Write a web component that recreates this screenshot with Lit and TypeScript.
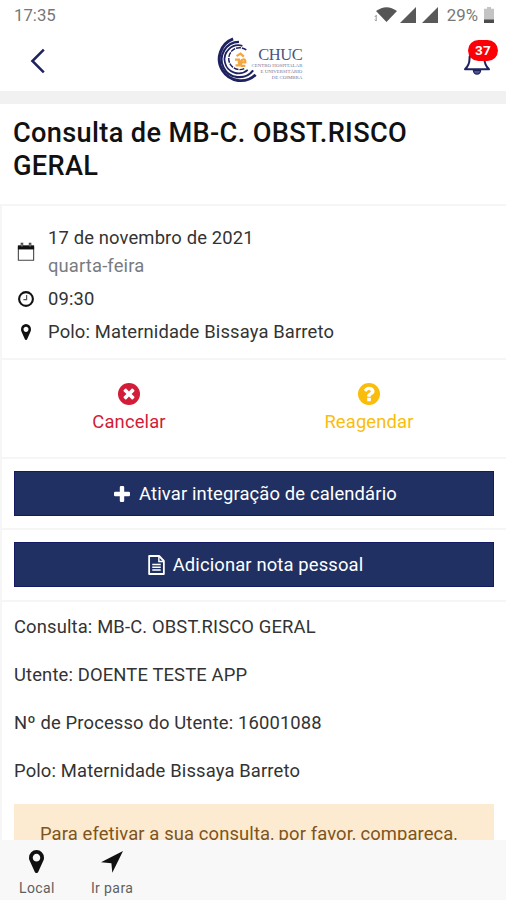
import { LitElement, html, css, svg } from "lit";
import { customElement, property } from "lit/decorators.js";

const icons: Record<string, { box: string; body: unknown }> = {
  back: {
    box: "0 0 16 26",
    body: svg`<path d="M13.800 1.600L2.400 13l11.400 11.400" fill="none" stroke="currentColor" stroke-width="2.500"/>`,
  },
  wifi: {
    box: "0 0 24 18",
    body: svg`<path d="M2 5Q12.500 -2.600 23 5L12.500 16z" fill="#565656"/><path d="M2.200 9v6M.8 11l1.400-1.600M.8 13.500l1.400 1.600" stroke="#999" stroke-width="1" fill="none"/>`,
  },
  signal: { box: "0 0 16 16", body: svg`<path d="M16 0v16H0z" fill="#595959"/>` },
  battery: {
    box: "0 0 10 16",
    body: svg`<path d="M3 0h4v1.800h3V16H0V1.800h3z" fill="#c4c4c4"/><path d="M0 12.500h10V16H0z" fill="#4c4c4c"/>`,
  },
  bell: {
    box: "0 0 28 30",
    body: svg`<path d="M2 23.300Q6.500 19 6.500 13q0-7 7.500-7t7.500 7q0 6 4.500 10.300z" fill="none" stroke="currentColor" stroke-width="2" stroke-linejoin="round"/><path d="M10.400 24.500a3.600 3.600 0 0 0 7.200 0z" fill="#4d5788" stroke="currentColor" stroke-width="1.200"/>`,
  },
  calendar: {
    box: "0 0 20 21",
    body: svg`<path d="M1.500 5h17v14.200h-17z" fill="none" stroke="#444" stroke-width="1.200" stroke-linejoin="round"/><path d="M1 3.500h18v4.300H1z" fill="#111"/><path d="M5.500.8v4M14.500.8v4" stroke="#333" stroke-width="2.800"/><path d="M5.500 1.600v3M14.500 1.600v3" stroke="#bbb" stroke-width=".9"/>`,
  },
  clock: {
    box: "0 0 18 18",
    body: svg`<circle cx="9" cy="9" r="6.900" fill="none" stroke="#111" stroke-width="2.100"/><path d="M9.600 5v4.700H6.400" fill="none" stroke="#555" stroke-width="1.200"/>`,
  },
  marker: {
    box: "0 128 1024 1536",
    body: svg`<path fill="currentColor" d="M768 640q0-106-75-181t-181-75-181 75-75 181 75 181 181 75 181-75 75-181zm256 0q0 109-33 179l-364 774q-16 33-47.500 52t-67.500 19-67.500-19-46.500-52l-365-774q-33-70-33-179 0-212 150-362t362-150 362 150 150 362z"/>`,
  },
  cancel: {
    box: "128 128 1536 1536",
    body: svg`<circle cx="896" cy="896" r="768" fill="currentColor"/><path fill="#fff" d="M1277 1122q0-26-19-45l-181-181 181-181q19-19 19-45 0-27-19-46l-90-90q-19-19-46-19-26 0-45 19l-181 181-181-181q-19-19-45-19-27 0-46 19l-90 90q-19 19-19 46 0 26 19 45l181 181-181 181q-19 19-19 45 0 27 19 46l90 90q19 19 46 19 26 0 45-19l181-181 181 181q19 19 45 19 27 0 46-19l90-90q19-19 19-46z"/>`,
  },
  question: {
    box: "128 128 1536 1536",
    body: svg`<circle cx="896" cy="896" r="768" fill="currentColor"/><path fill="#fff" d="M1024 1376v-192q0-14-9-23t-23-9h-192q-14 0-23 9t-9 23v192q0 14 9 23t23 9h192q14 0 23-9t9-23zm256-672q0-88-55.500-163t-138.500-116-170-41q-243 0-371 213-15 24 8 42l132 100q7 6 19 6 16 0 25-12 53-68 86-92 34-24 86-24 48 0 85.500 26t37.500 59q0 38-20 61t-68 45q-63 28-115.500 86.500t-52.500 125.500v36q0 14 9 23t23 9h192q14 0 23-9t9-23q0-19 21.500-49.500t54.500-49.500q32-18 49-28.500t46-35 44.500-48 28-60.500 12.500-81z"/>`,
  },
  plus: {
    box: "0 0 16 16",
    body: svg`<path fill="currentColor" d="M7 0h2q1.200 0 1.200 1.200v4.600h4.600Q16 5.800 16 7v2q0 1.200-1.200 1.200h-4.600v4.600Q10.200 16 9 16H7q-1.200 0-1.200-1.200v-4.600H1.200Q0 10.200 0 9V7q0-1.200 1.200-1.200h4.600V1.200Q5.800 0 7 0z"/>`,
  },
  note: {
    box: "0 0 18 20",
    body: svg`<g fill="none" stroke="currentColor"><path stroke-width="1.900" stroke-linejoin="round" d="M1.200 1h10.600l5 5v13H1.200z"/><path stroke-width="1.500" d="M11.500 1.500v5h5M4.500 9.500h9M4.500 12.300h9M4.500 15.100h9"/></g>`,
  },
  go: { box: "0 0 22 22", body: svg`<path fill="currentColor" d="M22 0L11.300 21.800l-.9-9.600L0 11.300z"/>` },
  logo: {
    box: "0 0 44 48",
    body: svg`<g fill="none" stroke="#1e2360"><path stroke-width="3" d="M17.500 2A22 22 0 1 0 40.500 38.500"/><path stroke-width="2.200" d="M23.500 5A18 18 0 1 0 38 34"/><path stroke-width="1.800" d="M27 9A14.300 14.300 0 1 0 32.500 33.500"/><path stroke-width="1.500" stroke-dasharray="5 1" d="M31 13.200A11.200 11.200 0 1 0 29.500 32"/></g><g fill="none" stroke="#f3a640" stroke-width="2.300"><path d="M21 19.500l4-2.500 3.500 3M19.500 23h4v6H20M30 29.500h-4q-1.500-6 1.500-6.500t2.500 3h-4"/></g>`,
  },
};

@customElement("ui-icon")
class UiIcon extends LitElement {
  @property() name = "";
  static styles = css`
    :host { display: block; flex: none; }
    .glyph { display: block; width: 100%; height: 100%; overflow: visible; }
  `;
  render() {
    const icon = icons[this.name];
    return html`<svg class="glyph" viewBox=${icon.box} preserveAspectRatio="none">${icon.body}</svg>`;
  }
}

@customElement("app-root")
class AppRoot extends LitElement {
  static styles = css`
    :host {
      display: flex; flex-direction: column; width: 506px; height: 900px; overflow: hidden;
      box-sizing: border-box; background: #fff; color: #333;
      font: 400 18.4px/28px Roboto, "Noto Sans", sans-serif; letter-spacing: .14px;
    }
    * { box-sizing: border-box; }
    .status {
      flex: none; display: flex; align-items: center; height: 30px; padding: 0 12px 0 14px;
      font-size: 16.800px; line-height: 30px; color: #777; letter-spacing: 0;
    }
    .time { flex: 1; }
    .wifi { width: 24px; height: 18px; }
    .signal { width: 16px; height: 16px; margin-left: 2px; }
    .signal + .signal { margin-left: 6px; }
    .charge { margin: 0 6px 0 9px; }
    .battery { width: 10px; height: 16px; }
    .bar {
      flex: none; display: grid; grid-template-columns: 1fr auto 1fr; align-items: center;
      height: 61px; padding: 0 15px 0 30px; color: #1e2360;
    }
    .back { width: 16px; height: 26px; }
    .brand { display: flex; letter-spacing: 0; padding-right: 3px; }
    .logo { width: 43px; height: 47px; }
    .words { display: flex; flex-direction: column; align-items: flex-end; padding-top: 10px; margin-left: -7px; font-family: "Liberation Serif", serif; }
    .name { font-size: 16.500px; line-height: 16px; color: #4d5380; letter-spacing: -.4px; }
    .sub { display: block; font-size: 4.900px; line-height: 6px; color: #71769a; text-align: right; white-space: nowrap; }
    .alerts { position: relative; justify-self: end; width: 28px; height: 30px; }
    .bell { width: 28px; height: 30px; }
    .count {
      position: absolute; left: 5px; top: -6px; width: 30px; height: 21px; border-radius: 11px;
      background: #fb0007; color: #fff; font-size: 13.500px; line-height: 21px; font-weight: 700; text-align: center;
    }
    .band { flex: none; height: 13px; background: #f1f1f1; }
    .title {
      flex: none; height: 100px; margin: 0; padding: 13px 80px 0 13px; font-size: 27.200px; line-height: 33px;
      font-weight: 500; color: #111; letter-spacing: .33px;
    }
    .page { flex: 1; min-height: 0; overflow: hidden; border-left: 2px solid #f6f6f6; }
    .card { border-top: 2px solid #f6f6f6; }
    .when { height: 154px; padding: 17.500px 14px 0; display: flex; flex-direction: column; gap: 5px; }
    .row { display: flex; align-items: center; color: #333; }
    .lead { display: flex; justify-content: center; width: 20px; margin-right: 12px; color: #111; }
    .day { color: #777c82; }
    .calendar { width: 18px; height: 20px; }
    .clock { width: 18px; height: 18px; }
    .pin { width: 10px; height: 16px; }
    .acts { height: 99px; display: grid; grid-template-columns: 240px 240px; padding: 23px 7px 0; }
    .act { display: flex; flex-direction: column; align-items: center; gap: 3px; }
    .round { width: 22px; height: 22px; }
    .red { color: #d21c38; }
    .amber { color: #fabd0c; }
    .slot { padding: 12px 12px 0; height: 71px; }
    .slot + .slot { height: 72px; }
    .button {
      display: flex; align-items: center; justify-content: center; width: 100%; height: 45px; padding: 0 0 0 3px;
      border: 1px solid #141a63; background: #203062; color: #fff; font: inherit; letter-spacing: .14px;
    }
    .plus { width: 16px; height: 16px; margin-right: 9px; }
    .note { width: 17px; height: 20px; margin-right: 8px; }
    .facts { display: flex; flex-direction: column; gap: 20px; padding: 11px 12px 0; }
    .fact { margin: 0; }
    .notice { margin-top: -1px; height: 80px; padding: 16px 26px; background: #fcebd0; color: #7d5420; white-space: nowrap; letter-spacing: .12px; }
    .foot {
      flex: none; display: flex; gap: 36px; height: 60px; padding: 10px 19px 0; background: #f8f8f8;
      color: #5f5f5f; font-size: 14px; line-height: 20px; letter-spacing: .4px;
    }
    .tab { display: flex; flex-direction: column; align-items: center; gap: 5px; }
    .shape { color: #111; }
    .place { width: 15px; height: 23px; }
    .go { width: 22px; height: 22px; margin-top: 1px; }
  `;

  render() {
    return html`
      <div class="status">
        <span class="time">17:35</span>
        <ui-icon class="wifi" name="wifi"></ui-icon>
        <ui-icon class="signal" name="signal"></ui-icon>
        <ui-icon class="signal" name="signal"></ui-icon>
        <span class="charge">29%</span>
        <ui-icon class="battery" name="battery"></ui-icon>
      </div>
      <header class="bar">
        <ui-icon class="back" name="back"></ui-icon>
        <div class="brand">
          <ui-icon class="logo" name="logo"></ui-icon>
          <div class="words">
            <span class="name">CHUC</span>
            <span class="sub">CENTRO HOSPITALAR</span>
            <span class="sub">E UNIVERSITÁRIO</span>
            <span class="sub">DE COIMBRA</span>
          </div>
        </div>
        <div class="alerts"><ui-icon class="bell" name="bell"></ui-icon><span class="count">37</span></div>
      </header>
      <div class="band"></div>
      <h1 class="title">Consulta de MB-C. OBST.RISCO GERAL</h1>
      <main class="page">
        <section class="card when">
          <div class="row">
            <span class="lead"><ui-icon class="calendar" name="calendar"></ui-icon></span>
            <div><div>17 de novembro de 2021</div><div class="day">quarta-feira</div></div>
          </div>
          <div class="row"><span class="lead"><ui-icon class="clock" name="clock"></ui-icon></span>09:30</div>
          <div class="row"><span class="lead"><ui-icon class="pin" name="marker"></ui-icon></span>Polo: Maternidade Bissaya Barreto</div>
        </section>
        <section class="card acts">
          <div class="act red"><ui-icon class="round" name="cancel"></ui-icon><span>Cancelar</span></div>
          <div class="act amber"><ui-icon class="round" name="question"></ui-icon><span>Reagendar</span></div>
        </section>
        <section class="card slot">
          <button class="button"><ui-icon class="plus" name="plus"></ui-icon>Ativar integração de calendário</button>
        </section>
        <section class="card slot">
          <button class="button"><ui-icon class="note" name="note"></ui-icon>Adicionar nota pessoal</button>
        </section>
        <section class="card facts">
          <p class="fact">Consulta: MB-C. OBST.RISCO GERAL</p>
          <p class="fact">Utente: DOENTE TESTE APP</p>
          <p class="fact">Nº de Processo do Utente: 16001088</p>
          <p class="fact">Polo: Maternidade Bissaya Barreto</p>
          <div class="notice">Para efetivar a sua consulta, por favor, compareça,</div>
        </section>
      </main>
      <footer class="foot">
        <div class="tab"><ui-icon class="shape place" name="marker"></ui-icon><span>Local</span></div>
        <div class="tab"><ui-icon class="shape go" name="go"></ui-icon><span>Ir para</span></div>
      </footer>
    `;
  }
}
